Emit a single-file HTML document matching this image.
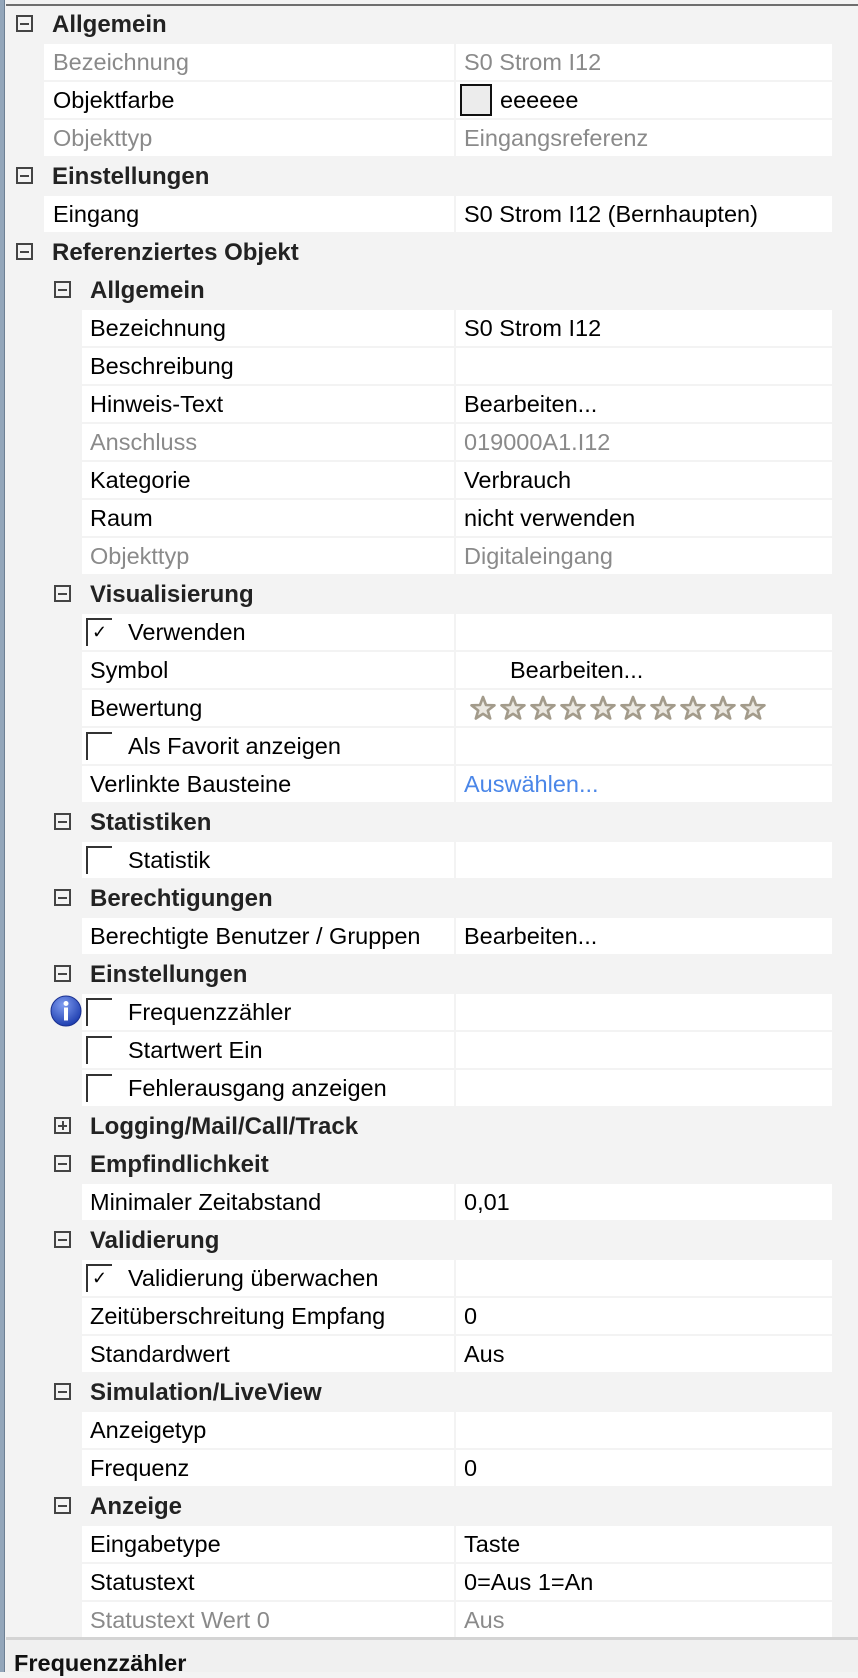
<!DOCTYPE html>
<html><head><meta charset="utf-8"><style>
*{margin:0;padding:0;box-sizing:border-box}
body{width:858px;height:1672px;overflow:hidden;background:#f3f3f3;font-family:"Liberation Sans",sans-serif;font-size:23.5px;color:#000;position:relative}
.strip{position:absolute;left:0;top:0;width:5px;height:1672px;background:#93a6ba;border-right:1px solid #6d7f93}
.topline{position:absolute;left:6px;top:4px;width:852px;height:2px;background:#6e6e6e}
.h,.l,.v{position:absolute;height:36px;line-height:36px;white-space:nowrap}
.h{font-weight:bold;height:38px;line-height:38px;color:#222;font-size:24px}
.l{background:#fff;width:410px;left:44px;padding-left:9px}
.l2{left:82px;width:372px;padding-left:8px}
.v{background:#fff;left:456px;width:376px;padding-left:8px}
.g{color:#8a8a8a}
.box{position:absolute;width:17px;height:17px;border:2px solid #444}
.box:after{content:"";position:absolute;left:2px;right:2px;top:5.5px;height:2px;background:#444}
.plus:before{content:"";position:absolute;top:2px;bottom:2px;left:5.5px;width:2px;background:#444}
.cb{position:absolute;left:86px;width:26px;height:28px;border-left:2px solid #333;border-top:2px solid #333}
.cbl{padding-left:46px}
.chk{position:absolute;left:4px;top:3px;font-size:18px;line-height:18px}
</style></head><body>
<div class="strip"></div><div class="topline"></div>

<div class="box" style="left:16px;top:15px"></div><div class="h" style="left:52px;top:6px">Allgemein</div>
<div class="l g" style="top:44px">Bezeichnung</div><div class="v g" style="top:44px">S0 Strom  I12</div>
<div class="l" style="top:82px">Objektfarbe</div><div class="v" style="top:82px;padding-left:44px"><span style="position:absolute;left:4px;top:2px;width:32px;height:32px;border:2px solid #111;background:#ececec"></span>eeeeee</div>
<div class="l g" style="top:120px">Objekttyp</div><div class="v g" style="top:120px">Eingangsreferenz</div>
<div class="box" style="left:16px;top:167px"></div><div class="h" style="left:52px;top:158px">Einstellungen</div>
<div class="l" style="top:196px">Eingang</div><div class="v" style="top:196px">S0 Strom  I12 (Bernhaupten)</div>
<div class="box" style="left:16px;top:243px"></div><div class="h" style="left:52px;top:234px">Referenziertes Objekt</div>
<div class="box" style="left:54px;top:281px"></div><div class="h" style="left:90px;top:272px">Allgemein</div>
<div class="l l2" style="top:310px">Bezeichnung</div><div class="v" style="top:310px">S0 Strom  I12</div>
<div class="l l2" style="top:348px">Beschreibung</div><div class="v" style="top:348px"></div>
<div class="l l2" style="top:386px">Hinweis-Text</div><div class="v" style="top:386px">Bearbeiten...</div>
<div class="l l2 g" style="top:424px">Anschluss</div><div class="v g" style="top:424px">019000A1.I12</div>
<div class="l l2" style="top:462px">Kategorie</div><div class="v" style="top:462px">Verbrauch</div>
<div class="l l2" style="top:500px">Raum</div><div class="v" style="top:500px">nicht verwenden</div>
<div class="l l2 g" style="top:538px">Objekttyp</div><div class="v g" style="top:538px">Digitaleingang</div>
<div class="box" style="left:54px;top:585px"></div><div class="h" style="left:90px;top:576px">Visualisierung</div>
<div class="l l2 cbl" style="top:614px"><span class="cb" style="left:4px;top:4px"><span class="chk">✓</span></span>Verwenden</div><div class="v" style="top:614px"></div>
<div class="l l2" style="top:652px">Symbol</div><div class="v" style="top:652px;padding-left:54px">Bearbeiten...</div>
<div class="l l2" style="top:690px">Bewertung</div><div class="v" style="top:690px">
<svg style="position:absolute;left:14px;top:5px" width="300" height="26" viewBox="0 0 300 26">
<defs><path id="s" d="M13 2 L16 10 L24.5 10.3 L17.8 15.5 L20.2 23.5 L13 18.8 L5.8 23.5 L8.2 15.5 L1.5 10.3 L10 10 Z" fill="#ebe8e1" stroke="#a39b8b" stroke-width="2.6" stroke-linejoin="round"/></defs>
<use href="#s" x="0"/><use href="#s" x="30"/><use href="#s" x="60"/><use href="#s" x="90"/><use href="#s" x="120"/><use href="#s" x="150"/><use href="#s" x="180"/><use href="#s" x="210"/><use href="#s" x="240"/><use href="#s" x="270"/>
</svg></div>
<div class="l l2 cbl" style="top:728px"><span class="cb" style="left:4px;top:4px"></span>Als Favorit anzeigen</div><div class="v" style="top:728px"></div>
<div class="l l2" style="top:766px">Verlinkte Bausteine</div><div class="v" style="top:766px;color:#4a86e8">Auswählen...</div>
<div class="box" style="left:54px;top:813px"></div><div class="h" style="left:90px;top:804px">Statistiken</div>
<div class="l l2 cbl" style="top:842px"><span class="cb" style="left:4px;top:4px"></span>Statistik</div><div class="v" style="top:842px"></div>
<div class="box" style="left:54px;top:889px"></div><div class="h" style="left:90px;top:880px">Berechtigungen</div>
<div class="l l2" style="top:918px">Berechtigte Benutzer / Gruppen</div><div class="v" style="top:918px">Bearbeiten...</div>
<div class="box" style="left:54px;top:965px"></div><div class="h" style="left:90px;top:956px">Einstellungen</div>
<svg style="position:absolute;left:50px;top:995px" width="32" height="32" viewBox="0 0 32 32"><defs><radialGradient id="ig" cx="40%" cy="30%" r="70%"><stop offset="0" stop-color="#7f9cf0"/><stop offset="1" stop-color="#1f3fb0"/></radialGradient></defs><circle cx="16" cy="16" r="15" fill="url(#ig)" stroke="#1a3090"/><circle cx="16" cy="8.5" r="2.5" fill="#fff"/><rect x="14" y="12.5" width="4" height="13" fill="#fff"/></svg>
<div class="l l2 cbl" style="top:994px"><span class="cb" style="left:4px;top:4px"></span>Frequenzzähler</div><div class="v" style="top:994px"></div>
<div class="l l2 cbl" style="top:1032px"><span class="cb" style="left:4px;top:4px"></span>Startwert Ein</div><div class="v" style="top:1032px"></div>
<div class="l l2 cbl" style="top:1070px"><span class="cb" style="left:4px;top:4px"></span>Fehlerausgang anzeigen</div><div class="v" style="top:1070px"></div>
<div class="box plus" style="left:54px;top:1117px"></div><div class="h" style="left:90px;top:1108px">Logging/Mail/Call/Track</div>
<div class="box" style="left:54px;top:1155px"></div><div class="h" style="left:90px;top:1146px">Empfindlichkeit</div>
<div class="l l2" style="top:1184px">Minimaler Zeitabstand</div><div class="v" style="top:1184px">0,01</div>
<div class="box" style="left:54px;top:1231px"></div><div class="h" style="left:90px;top:1222px">Validierung</div>
<div class="l l2 cbl" style="top:1260px"><span class="cb" style="left:4px;top:4px"><span class="chk">✓</span></span>Validierung überwachen</div><div class="v" style="top:1260px"></div>
<div class="l l2" style="top:1298px">Zeitüberschreitung Empfang</div><div class="v" style="top:1298px">0</div>
<div class="l l2" style="top:1336px">Standardwert</div><div class="v" style="top:1336px">Aus</div>
<div class="box" style="left:54px;top:1383px"></div><div class="h" style="left:90px;top:1374px">Simulation/LiveView</div>
<div class="l l2" style="top:1412px">Anzeigetyp</div><div class="v" style="top:1412px"></div>
<div class="l l2" style="top:1450px">Frequenz</div><div class="v" style="top:1450px">0</div>
<div class="box" style="left:54px;top:1497px"></div><div class="h" style="left:90px;top:1488px">Anzeige</div>
<div class="l l2" style="top:1526px">Eingabetype</div><div class="v" style="top:1526px">Taste</div>
<div class="l l2" style="top:1564px">Statustext</div><div class="v" style="top:1564px">0=Aus 1=An</div>
<div class="l l2 g" style="top:1602px">Statustext Wert 0</div><div class="v g" style="top:1602px">Aus</div>

<div style="position:absolute;left:6px;top:1637px;width:852px;height:3px;background:#d4d4d4"></div>
<div style="position:absolute;left:6px;top:1640px;width:852px;height:32px;background:#f0f0f0"></div>
<div style="position:absolute;left:14px;top:1648px;font-weight:bold;font-size:23.5px;line-height:30px;color:#111">Frequenzzähler</div>
</body></html>
